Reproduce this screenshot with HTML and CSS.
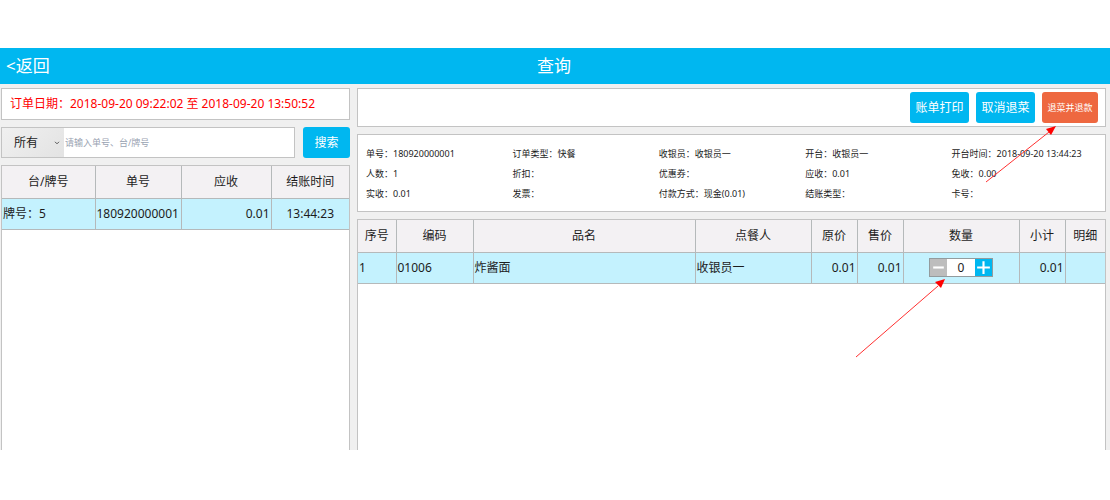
FILE: index.html
```html
<!DOCTYPE html>
<html lang="zh-CN">
<head>
<meta charset="utf-8">
<meta name="viewport" content="width=device-width, initial-scale=1">
<title>查询</title>
<link rel="stylesheet" href="styles.css">
</head>
<body>
<div class="app">
  <header class="topbar">
    <a class="back" href="#">&lt;返回</a>
    <h1 class="title">查询</h1>
  </header>
  <main class="content">
    <section class="side">
      <p class="panel date-range">订单日期：2018-09-20 09:22:02 至 2018-09-20 13:50:52</p>
      <form class="search">
        <div class="search-box">
          <div class="filter">
            <select class="filter-select" aria-label="类型"><option>所有</option></select>
            <svg class="chevron" viewBox="0 0 6 4" aria-hidden="true"><path d="M1 .8 3 2.8 5 .8"/></svg>
          </div>
          <input class="search-input" type="text" aria-label="搜索内容" placeholder="请输入单号、台/牌号">
        </div>
        <button class="btn btn-search" type="button">搜索</button>
      </form>
      <div class="panel table-panel">
        <table class="grid">
          <colgroup><col class="l-table"><col class="l-no"><col class="l-due"><col class="l-time"></colgroup>
          <thead><tr><th>台/牌号</th><th>单号</th><th>应收</th><th>结账时间</th></tr></thead>
          <tbody><tr><td>牌号：5</td><td>180920000001</td><td class="num">0.01</td><td class="mid">13:44:23</td></tr></tbody>
        </table>
      </div>
    </section>
    <section class="detail">
      <div class="panel toolbar">
        <button class="btn" type="button">账单打印</button>
        <button class="btn" type="button">取消退菜</button>
        <div class="pointed">
          <button class="btn btn-refund" type="button">退菜并退款</button>
          <svg class="arrow arrow-refund" viewBox="0 0 72 57" aria-hidden="true"><path class="arrow-line" d="M1 56 64 6"/><path class="arrow-head" d="M71 0 66 9 61 3Z"/></svg>
        </div>
      </div>
      <div class="panel info">
        <span>单号：180920000001</span><span>订单类型：快餐</span><span>收银员：收银员一</span><span>开台：收银员一</span><span>开台时间：2018-09-20 13:44:23</span>
        <span>人数：1</span><span>折扣：</span><span>优惠券：</span><span>应收：0.01</span><span>免收：0.00</span>
        <span>实收：0.01</span><span>发票：</span><span>付款方式：现金(0.01)</span><span>结账类型：</span><span>卡号：</span>
      </div>
      <div class="panel table-panel">
        <table class="grid">
          <colgroup><col class="r-index"><col class="r-code"><col class="r-name"><col class="r-staff"><col class="r-price"><col class="r-price"><col class="r-qty"><col class="r-price"><col class="r-more"></colgroup>
          <thead><tr><th>序号</th><th>编码</th><th>品名</th><th>点餐人</th><th>原价</th><th>售价</th><th>数量</th><th>小计</th><th>明细</th></tr></thead>
          <tbody><tr><td>1</td><td>01006</td><td>炸酱面</td><td>收银员一</td><td class="num">0.01</td><td class="num">0.01</td>
            <td class="qty">
              <div class="stepper">
                <button class="step minus" type="button" aria-label="减少"><svg viewBox="0 0 16 16" aria-hidden="true"><path d="M3 8H13"/></svg></button>
                <input class="step-value" type="text" value="0" aria-label="数量">
                <button class="step plus" type="button" aria-label="增加"><svg viewBox="0 0 16 16" aria-hidden="true"><path d="M2 8H14M8 2V14"/></svg></button>
                <svg class="arrow arrow-qty" viewBox="0 0 91 79" aria-hidden="true"><path class="arrow-line" d="M1 78 83 7"/><path class="arrow-head" d="M90 0 86 9 80 3Z"/></svg>
              </div>
            </td>
            <td class="num">0.01</td><td></td></tr></tbody>
        </table>
      </div>
    </section>
  </main>
</div>
</body>
</html>
```
FILE: styles.css
```css
* { box-sizing: border-box; }

body {
  margin: 0;
  background: #fff;
  color: #1c1c1c;
  font: 12px/18px "Noto Sans", "Noto Sans CJK SC", sans-serif;
}

button, input, select { font: inherit; margin: 0; }

.app {
  display: flex;
  flex-direction: column;
  min-height: 100vh;
  padding: 48px 0 50px;
}

.topbar {
  display: grid;
  grid-template-columns: 1fr auto 1fr;
  align-items: center;
  height: 36px;
  padding: 0 8px 0 6px;
  background: #00b7f0;
  color: #fff;
  font-size: 17px;
  line-height: 24px;
}

.back { color: inherit; text-decoration: none; }
.title { margin: 0; font-size: 17px; font-weight: 400; }

.content {
  display: grid;
  grid-template-columns: 349fr 749fr;
  gap: 7px;
  flex: 1;
  padding: 4px 4px 0 1px;
  background: #f0f0f0;
}

.side, .detail {
  display: flex;
  flex-direction: column;
  gap: 7px;
  min-width: 0;
}

.panel {
  margin: 0;
  border: 1px solid #c3c3c3;
  background: #fff;
}

.date-range {
  height: 32px;
  padding: 6px 8px;
  color: #f00;
}

.search { display: flex; gap: 8px; height: 31px; }

.search-box {
  display: flex;
  flex: 1;
  min-width: 0;
  border: 1px solid #c3c3c3;
  background: #fff;
}

.filter { position: relative; display: flex; width: 62px; }

.filter-select {
  width: 100%;
  padding: 0 12px;
  border: 0;
  border-radius: 0;
  appearance: none;
  background: linear-gradient(135deg, #f0f0f0, #e3e3e3);
  color: #1c1c1c;
}

.chevron {
  position: absolute;
  right: 4px;
  top: 13px;
  width: 6px;
  height: 4px;
  fill: none;
  stroke: #555;
}

.search-input {
  flex: 1;
  min-width: 0;
  padding: 0 1px;
  border: 0;
  background: none;
  font-size: 9px;
}
.search-input::placeholder { color: #9aa3b2; }

.btn {
  height: 31px;
  padding: 0 5px;
  border: 0;
  border-radius: 3px;
  background: #00b7f0;
  color: #fff;
  white-space: nowrap;
}
.toolbar .btn { min-width: 59px; }
.toolbar .btn-refund { min-width: 56px; background: #ee6840; font-size: 9px; }
.btn-search { width: 47px; }

.table-panel { flex: 1; border-bottom: 0; }

.toolbar {
  display: flex;
  justify-content: flex-end;
  gap: 7px;
  padding: 3px 7px;
}

.pointed { position: relative; display: flex; }

.arrow { position: absolute; overflow: visible; pointer-events: none; }
.arrow-line { fill: none; stroke: #ff3030; stroke-width: 1; }
.arrow-head { fill: #f00; }
.arrow-refund { right: 41px; top: 34px; width: 72px; height: 57px; }
.arrow-qty { right: 46px; top: 20px; width: 91px; height: 79px; }

.info {
  display: grid;
  grid-template-columns: repeat(5, 1fr);
  gap: 2px 0;
  padding: 10px 7px 8px 8px;
  font-size: 9px;
}
.info span { white-space: nowrap; }

.grid {
  width: 100%;
  border-collapse: collapse;
  table-layout: fixed;
}
.grid th, .grid td {
  height: 32px;
  padding: 0 1px;
  border: 1px solid #b5b9ba;
  font-weight: 400;
  text-align: left;
  white-space: nowrap;
}
.grid th { background: #f3f1f3; text-align: center; }
.grid td { height: 31px; background: #c4f2fe; }
.grid tr > :first-child { border-left: 0; }
.grid tr > :last-child { border-right: 0; }
.grid thead th { border-top: 0; }
.grid .num { text-align: right; }
.grid .mid { text-align: center; }

.l-table { width: 93px; }
.l-no { width: 86px; }
.l-due { width: 90px; }
.l-time { width: auto; }

.r-index { width: 38px; }
.r-code { width: 77px; }
.r-name { width: auto; }
.r-staff { width: 116px; }
.r-price { width: 46px; }
.r-qty { width: 116px; }
.r-more { width: 40px; }

.stepper {
  position: relative;
  display: flex;
  width: 64px;
  height: 19px;
  margin: 0 auto;
  border: 1px solid #939b9d;
}
.step {
  display: flex;
  width: 17px;
  padding: 0;
  border: 0;
}
.step svg { width: 100%; height: 100%; fill: none; stroke: #fff; stroke-width: 2; }
.minus { background: #bdbdbd; }
.plus { background: #00b7f0; }
.step-value {
  flex: 1;
  min-width: 0;
  padding: 0;
  border: 0;
  background: #fff;
  color: #1c1c1c;
  text-align: center;
}
```
